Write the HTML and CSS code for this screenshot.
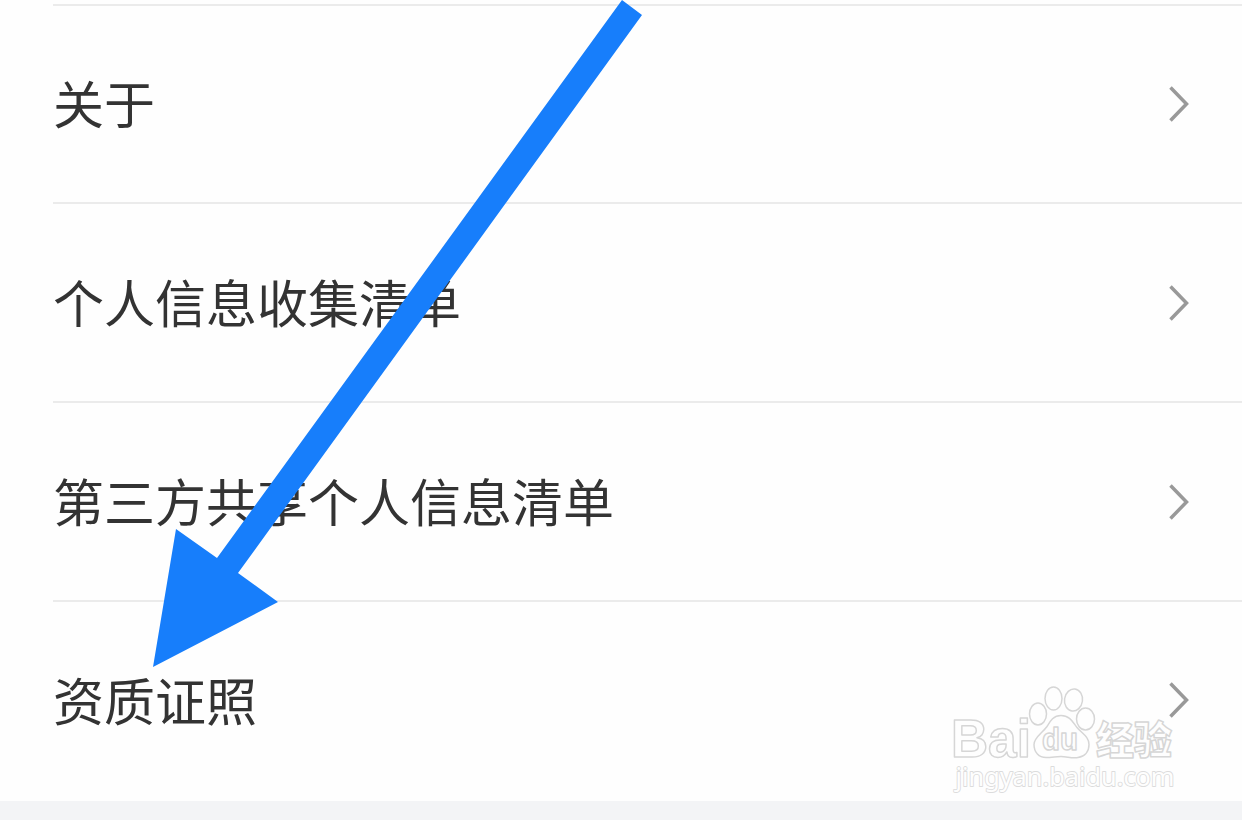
FILE: index.html
```
<!DOCTYPE html>
<html lang="zh-CN">
<head>
    <meta charset="UTF-8">
    <meta name="viewport" content="width=device-width, initial-scale=1.0">
    <title>设置</title>
    <link rel="stylesheet" href="styles.css">
</head>
<body>
    <!-- Menu list -->
    <div class="menu">
        <div class="menu-item">
            <span>关于</span>
            <svg class="chevron" viewBox="0 0 22 38"><path d="M2.5 2.5 18.5 19 2.5 35.5"/></svg>
        </div>
        <div class="menu-item">
            <span>个人信息收集清单</span>
            <svg class="chevron" viewBox="0 0 22 38"><path d="M2.5 2.5 18.5 19 2.5 35.5"/></svg>
        </div>
        <div class="menu-item">
            <span>第三方共享个人信息清单</span>
            <svg class="chevron" viewBox="0 0 22 38"><path d="M2.5 2.5 18.5 19 2.5 35.5"/></svg>
        </div>
        <div class="menu-item">
            <span>资质证照</span>
            <svg class="chevron" viewBox="0 0 22 38"><path d="M2.5 2.5 18.5 19 2.5 35.5"/></svg>
        </div>
    </div>

    <!-- Pointer arrow -->
    <svg class="arrow" viewBox="0 0 1242 820">
        <path d="M622 0 642 15 238 573 278 602 153 667 176 529 217 558Z"/>
    </svg>

    <!-- Watermark -->
    <svg class="watermark" viewBox="945 680 240 120">
        <text class="logo" x="951" y="756.5" textLength="80" lengthAdjust="spacingAndGlyphs">Bai</text>
        <ellipse cx="1038" cy="714" rx="8.5" ry="11"/>
        <ellipse cx="1053.5" cy="698.5" rx="8.5" ry="11.5"/>
        <ellipse cx="1073.5" cy="700" rx="9" ry="11" transform="rotate(8 1073.5 700)"/>
        <ellipse cx="1085.5" cy="719" rx="9" ry="11"/>
        <path d="M1061 715.5c-8 0-11 6-14 11-5 7-13 11-13 18 0 8 5 13 12 13 6 0 10-1 15-1 6 0 11 2 17 1 7-1 11-6 11-13 0-8-7-11-12-17-4-5-7-12-16-12Z"/>
        <text class="du" x="1042" y="750" textLength="36" lengthAdjust="spacingAndGlyphs">du</text>
        <text class="cn" x="1096" y="753.5" textLength="76" lengthAdjust="spacingAndGlyphs">经验</text>
        <text class="site" x="955.5" y="785.5" textLength="219" lengthAdjust="spacingAndGlyphs">jingyan.baidu.com</text>
    </svg>
</body>
</html>
```
FILE: styles.css
```
body, html {
    margin: 0;
    padding: 0;
    height: 820px;
    overflow: hidden;
    font-family: "Noto Sans CJK SC", sans-serif;
    background-color: #f3f4f6;
}

/* Menu */
.menu {
    box-sizing: border-box;
    height: 801px;
    padding: 3.6px 0 0 53px;
    background-color: #fefefe;
}

.menu-item {
    display: flex;
    justify-content: space-between;
    align-items: center;
    box-sizing: border-box;
    height: 198.8px;
    padding-right: 52px;
    border-top: 2px solid #ebebeb;
    color: #333;
    font-size: 51px;
    line-height: 76px;
}

.menu-item span {
    padding-bottom: 3px;
}

.chevron {
    width: 22px;
    height: 38px;
}

.chevron path {
    fill: none;
    stroke: #999;
    stroke-width: 3.5;
}

/* Arrow drawn over the list */
.arrow {
    position: absolute;
    top: 0;
    left: 0;
    width: 1242px;
    height: 820px;
    fill: #177efb;
}

/* Watermark */
.watermark {
    position: absolute;
    top: 680px;
    left: 945px;
    width: 240px;
    height: 120px;
    fill: #fefefe;
    stroke: #d6d6d6;
    stroke-width: 1.5;
    stroke-linejoin: round;
}

.logo {
    font: bold 53px "Liberation Sans", sans-serif;
}

.du {
    font: bold 31px "Liberation Sans", sans-serif;
}

.cn {
    font: 900 39px "Noto Sans CJK SC", sans-serif;
}

.site {
    font: 26px "Noto Sans", sans-serif;
    stroke: #dcdcdc;
    stroke-width: 1.8;
    paint-order: stroke;
}
```
